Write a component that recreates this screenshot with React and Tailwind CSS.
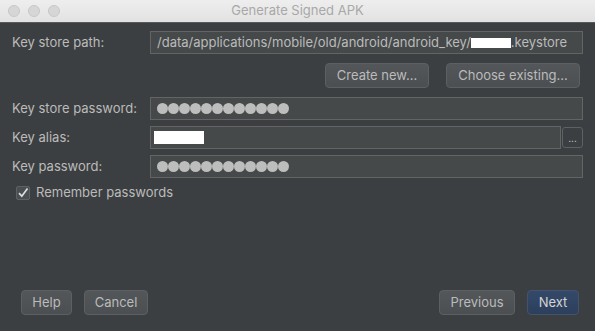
import React from "react";

const font = { fontFamily: 'Inter, "Liberation Sans", Arial, sans-serif' };

function Dots({ n = 12 }) {
  return (
    <div className="flex items-center">
      {Array.from({ length: n }).map((_, i) => (
        <span key={i} className="w-[11px] h-[11px] rounded-full bg-[#bdbdbd] shrink-0" />
      ))}
    </div>
  );
}

function Field({ children, className = "" }) {
  return (
    <div
      className={
        "h-[23px] border border-[#646464] bg-[#45494a] flex items-center px-[6px] text-[13px] text-[#bbbbbb] overflow-hidden whitespace-nowrap " +
        className
      }
    >
      {children}
    </div>
  );
}

function Btn({ children, className = "", primary = false }) {
  return (
    <div
      className={
        "h-[25px] flex items-center justify-center rounded-[4px] border text-[13px] " +
        (primary
          ? "bg-gradient-to-b from-[#34496a] to-[#2c3f5c] border-[#43536b] text-[#d4d4d4] "
          : "bg-gradient-to-b from-[#53575a] to-[#4b4f51] border-[#5c6063] text-[#bbbbbb] ") +
        className
      }
    >
      {children}
    </div>
  );
}

export default function App() {
  return (
    <div className="w-[595px] h-[331px] flex flex-col bg-[#3c3f41]" style={font}>
      <div className="h-[23px] shrink-0 relative flex items-center justify-center bg-gradient-to-b from-[#eeeeee] to-[#e2e2e2] border-b border-[#5a5a5a]">
        <div className="absolute left-[8px] top-[5px] flex gap-[8px]">
          <span className="w-[12px] h-[12px] rounded-full bg-[#d6d6d6] border border-[#c8c8c8]" />
          <span className="w-[12px] h-[12px] rounded-full bg-[#d6d6d6] border border-[#c8c8c8]" />
          <span className="w-[12px] h-[12px] rounded-full bg-[#d6d6d6] border border-[#c8c8c8]" />
        </div>
        <span className="text-[13px] text-[#a8a8a8]">Generate Signed APK</span>
      </div>

      <div className="flex-1 flex flex-col pl-[12px] pr-[12px]">
        <div className="flex items-center mt-[8px]">
          <div className="w-[138px] text-[13px] text-[#bbbbbb]">Key store path:</div>
          <Field className="flex-1">
            <span>/data/applications/mobile/old/android/android_key/</span>
            <span className="inline-block w-[40px] h-[10px] bg-white" />
            <span>.keystore</span>
          </Field>
        </div>

        <div className="flex justify-end gap-[17px] mt-[9px] pr-[3px]">
          <Btn className="w-[104px]">Create new...</Btn>
          <Btn className="w-[134px]">Choose existing...</Btn>
        </div>

        <div className="flex items-center mt-[9px]">
          <div className="w-[138px] text-[13px] text-[#bbbbbb]">Key store password:</div>
          <Field className="flex-1">
            <Dots />
          </Field>
        </div>

        <div className="flex items-center mt-[6px]">
          <div className="w-[138px] text-[13px] text-[#bbbbbb]">Key alias:</div>
          <Field className="flex-1 !px-[3px]">
            <span className="inline-block w-[50px] h-[13px] bg-white" />
          </Field>
          <div className="ml-[1px] w-[21px] h-[21px] rounded-[3px] border border-[#5e6163] flex items-center justify-center text-[10px] text-[#cfcfcf] leading-none">
            ...
          </div>
        </div>

        <div className="flex items-center mt-[6px]">
          <div className="w-[138px] text-[13px] text-[#bbbbbb]">Key password:</div>
          <Field className="flex-1">
            <Dots />
          </Field>
        </div>

        <div className="flex items-center mt-[5px] pl-[4px]">
          <div className="w-[14px] h-[14px] rounded-[2px] bg-[#4b4e50] border border-[#5f6264] flex items-center justify-center">
            <svg width="12" height="12" viewBox="0 0 12 12">
              <path d="M2 6.2 L4.8 9.2 L10.5 1.5" fill="none" stroke="#dddddd" strokeWidth="1.7" />
            </svg>
          </div>
          <span className="ml-[6px] text-[13px] text-[#bbbbbb]">Remember passwords</span>
        </div>

        <div className="mt-auto mb-[16px] flex items-center pl-[9px] pr-[4px]">
          <Btn className="w-[51px] h-[25px]">Help</Btn>
          <Btn className="w-[64px] ml-[12px]">Cancel</Btn>
          <div className="flex-1" />
          <Btn className="w-[76px]">Previous</Btn>
          <Btn primary className="w-[52px] ml-[12px]">Next</Btn>
        </div>
      </div>
    </div>
  );
}
